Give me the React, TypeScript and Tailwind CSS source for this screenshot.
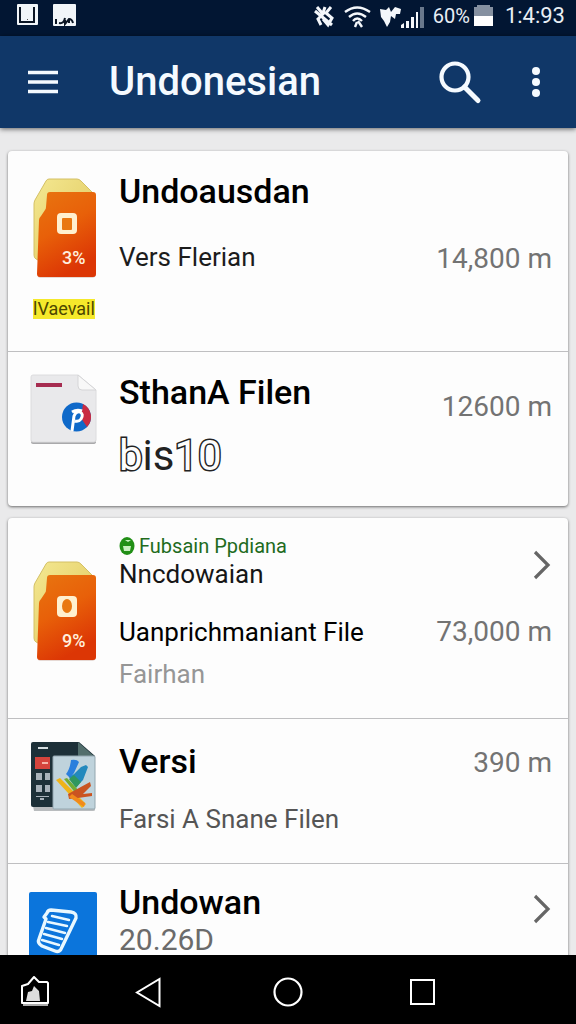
import type { ReactNode } from "react";

function StatusBar() {
  return (
    <div className="flex h-9 shrink-0 items-center bg-[#021633] pr-[11px] pb-1 pl-4 text-[#e8eef5]">
      <svg className="mb-1" width="60" height="24" viewBox="0 0 60 24">
        <rect x="1" y="2" width="21" height="21" rx="1" fill="#f1f5f9" />
        <path d="M4 5v15h14V5" fill="none" stroke="#0b1524" strokeWidth="2" />
        <rect x="11" y="17" width="1" height="1" fill="#555" />
        <rect x="37" y="2" width="23" height="22" rx="1" fill="#f1f5f9" />
        <path
          d="M40 17v5M43 21q5 1 6-5M49 18v4l4-5q3 0 4 4M53 17v4"
          fill="none"
          stroke="#0b1524"
          strokeWidth="2"
        />
      </svg>
      <div className="ml-auto flex items-center gap-1">
        <svg className="mr-1" width="112" height="26" viewBox="0 0 112 26">
          {/* muted */}
          <g fill="none" stroke="#f4f7fb" strokeWidth="3">
            <path d="M4 4l6 7-5 5 3 6M18 4l-5 6 6 5-4 7-5-6M2 8l17 14M12 4l-2 6" />
          </g>
          {/* wifi */}
          <g fill="none" stroke="#f4f7fb" strokeWidth="2.4">
            <path d="M32 9q12-9 25 0M36 14q8-7 17 0M40 18q4-5 9 0M44 19l-2 5M45 18l4 6" />
          </g>
          {/* data */}
          <path
            d="M67 6l6 1 3-3 2 5 4-5 6 2-1 5-4 0-1 5-4-3-1 6-3 5-3-6-3-4z"
            fill="#f4f7fb"
          />
          <g fill="#f4f7fb">
            <path d="M88 25v-3l3-2v5z" />
            <rect x="93" y="18" width="3" height="7" />
            <rect x="98" y="14" width="3" height="11" />
            <rect x="103" y="9" width="2" height="16" />
            <rect x="107" y="4" width="4" height="21" fill="#69788c" />
          </g>
        </svg>
        <span className="text-[20px] leading-6">60%</span>
        <svg width="19" height="24" viewBox="0 0 19 24">
          <path d="M3 1h13v2h3v9H0V3h3z" fill="#8590a0" />
          <rect y="12" width="19" height="10" fill="#fff" />
        </svg>
        <span className="ml-2 text-[22px] leading-6">1:4:93</span>
      </div>
    </div>
  );
}

function AppBar() {
  return (
    <header className="z-10 flex h-[92px] shrink-0 items-center bg-[#103768] pr-6 pl-7 text-[#f5faff] shadow-[0_1px_5px_rgba(0,0,0,0.6)]">
      <button type="button" aria-label="Menu">
        <svg width="30" height="24" viewBox="0 0 30 24">
          <path d="M0 2.5h30M0 12h30M0 21.5h30" stroke="currentColor" strokeWidth="3.4" />
        </svg>
      </button>
      <h1 className="ml-[51px] flex-1 text-[40px] leading-12 font-medium">Undonesian</h1>
      <button type="button" aria-label="Search">
        <svg width="44" height="46" viewBox="0 0 44 46" fill="none" stroke="currentColor">
          <circle cx="17" cy="18" r="13.5" strokeWidth="4.2" />
          <path d="M26.5 28L40 41.5" strokeWidth="5" strokeLinecap="round" />
        </svg>
      </button>
      <button type="button" aria-label="More options" className="ml-[38px]">
        <svg width="32" height="32" viewBox="0 0 32 32" fill="currentColor">
          <circle cx="16" cy="5" r="4" />
          <circle cx="16" cy="16" r="4" />
          <circle cx="16" cy="27" r="4" />
        </svg>
      </button>
    </header>
  );
}

function OrangeFolder({ round }: { round?: boolean }) {
  return (
    <svg width="68" height="102" viewBox="0 0 68 102">
      <defs>
        <linearGradient id="orange" x1="0" y1="0" x2="0.4" y2="1">
          <stop offset="0" stopColor="#e87510" />
          <stop offset="0.5" stopColor="#e86009" />
          <stop offset="1" stopColor="#dc3605" />
        </linearGradient>
        <linearGradient id="cream" x1="0" y1="0" x2="1" y2="1">
          <stop offset="0" stopColor="#f4e891" />
          <stop offset="1" stopColor="#dfc65b" />
        </linearGradient>
      </defs>
      <path d="M9 99q0 1.5 2 1.5h53q2.5 0 2.5-2V92H9z" fill="#8f4a35" opacity="0.4" />
      <path
        d="M20 2h28q2 0 4 2l12 12-40 30-13 38-4-2q-2-1-2-4V27q0-2 1-4L17 4q1-2 3-2z"
        fill="url(#cream)"
        stroke="#d4c065"
      />
      <path
        d="M21 15h43q3 0 3 3v79q0 3-3 3H11q-3 0-3-3L10 43q0-2 2-4l4-6q1-1 1-3l1-12q0-3 3-3z"
        fill="url(#orange)"
      />
      <rect x="28" y="36" width="20" height="21" rx="4" fill="#fff0cf" />
      {round ? (
        <ellipse cx="38" cy="46" rx="5" ry="7" fill="#e97810" />
      ) : (
        <rect x="33" y="41" width="10" height="12" rx="1" fill="#e97810" />
      )}
      <text x="33" y="87" fill="#fff0df" fontSize="18" fontWeight="500">
        {round ? "9%" : "3%"}
      </text>
    </svg>
  );
}

function PaperIcon() {
  return (
    <svg width="68" height="72" viewBox="0 0 68 72">
      <path d="M2 66v2q0 2 2 2h60q3 0 3-2v-4z" fill="#a9a9ab" />
      <path d="M4 1h45l18 15v50q0 2-2 2H4q-2 0-2-2V3q0-2 2-2z" fill="#e9e9eb" stroke="#dcdcde" />
      <path d="M49 1v11q0 4 4 4h14z" fill="#f8f8f8" stroke="#d5d5d7" />
      <rect x="7" y="9" width="26" height="4" fill="#a62c50" />
      <circle cx="47.5" cy="43" r="14.5" fill="#0f69c9" />
      <path d="M54 30a14.5 14.5 0 0 1 4 23l-6-9z" fill="#c92b42" />
      <path
        d="M43 57l2-15q2-5 6-4 4 2 1 7-2 3-6 2M43 38q5-3 10-1"
        fill="none"
        stroke="#fff"
        strokeWidth="3"
      />
    </svg>
  );
}

function CollageIcon() {
  return (
    <svg width="68" height="72" viewBox="0 0 68 72">
      <path d="M4 65h62v4q0 1-2 1H5z" fill="#b9bcbe" />
      <path d="M4 1h46l16 14v51H4q-2 0-2-2V3q0-2 2-2z" fill="#1d3038" />
      <path d="M49 1l17 15H51q-2 0-2-2z" fill="#526e6c" />
      <rect x="9" y="6" width="10" height="2" fill="#d5dde0" />
      <rect x="6" y="16" width="15" height="12" fill="#d5443c" />
      <rect x="13" y="21" width="6" height="2" fill="#f5b5a8" />
      <g fill="#a8b2ba">
        <rect x="7" y="32" width="6" height="7" />
        <rect x="16" y="32" width="5" height="7" />
        <rect x="7" y="44" width="6" height="7" />
        <rect x="16" y="44" width="5" height="7" />
        <rect x="7" y="55" width="13" height="1" />
        <rect x="11" y="57" width="4" height="2" />
      </g>
      <rect x="24" y="15" width="42" height="53" rx="1" fill="#bfd3dc" stroke="#93a6af" />
      <path d="M42 19q6-1 8 2l-5 11-4 5-4-4q4-5 5-14z" fill="#2a7fdd" />
      <path d="M52 26l5-2 2 2-5 13-6 6-8-9 5-3z" fill="#2389bd" />
      <path d="M45 34l7 7-5 6-7-9z" fill="#30975f" />
      <path d="M27 39l4-2 26 26-4 4z" fill="#efb318" />
      <path d="M35 38l3-1 13 14-3 3z" fill="#72ac32" />
      <path d="M39 53l22-12 1 4-8 8 9-1v3l-14 2-9 1z" fill="#ca5421" />
      <path d="M43 53l13 9-1 4-15-10z" fill="#f18a1c" />
    </svg>
  );
}

function DocumentIcon() {
  return (
    <svg width="68" height="72" viewBox="0 0 68 72">
      <rect width="68" height="72" rx="2" fill="#0b75dc" />
      <g fill="none" stroke="#e9f8ff" strokeLinejoin="round" strokeLinecap="round">
        <path
          d="M22 18l20 2q6 1 5 6L33 55q-2 6-7 4l-13-5q-5-3-3-7l7-20-2-2 3-4q1-3 4-3z"
          strokeWidth="3.4"
        />
        <path
          d="M23 24l17 4M19 30l19 4M17 36l19 5M15 42l18 5M13 48l17 5"
          strokeWidth="2.5"
        />
      </g>
    </svg>
  );
}

function Chevron() {
  return (
    <svg className="mr-px" width="18" height="30" viewBox="0 0 18 30">
      <path d="M2 2l13 13L2 28" fill="none" stroke="#666" strokeWidth="3.2" />
    </svg>
  );
}

interface RowProps {
  icon: ReactNode;
  side: ReactNode;
  children: ReactNode;
  className: string;
}

function Row({ icon, side, children, className }: RowProps) {
  return (
    <li className={`flex border-b border-[#bfbfc1] pr-4 last:border-b-0 ${className}`}>
      <div className="flex w-[111px] shrink-0 flex-col items-start pt-[22px] pl-[21px]">{icon}</div>
      <div className="min-w-0 flex-1 whitespace-nowrap">{children}</div>
      <div className="flex flex-col items-end whitespace-nowrap text-[28px] leading-8 text-[#737373]">
        {side}
      </div>
    </li>
  );
}

function Card({ children }: { children: ReactNode }) {
  return (
    <ul className="shrink-0 rounded-sm bg-[#fdfdfd] shadow-[0_1px_3px_rgba(0,0,0,0.55)]">
      {children}
    </ul>
  );
}

function NavBar() {
  return (
    <nav className="flex h-[69px] shrink-0 items-center bg-black pt-1 pl-5 text-white">
      <button type="button" aria-label="Gallery">
        <svg width="30" height="32" viewBox="0 0 30 32">
          <path
            d="M2 10l6-2 6-7 5 5 8 0 1 1v20H2z"
            fill="none"
            stroke="currentColor"
            strokeWidth="2"
            strokeLinejoin="round"
          />
          <path d="M6 25l2-9 4-1 2-5 5 5 1 10z" fill="#ddd" />
          <path d="M3 29h25" stroke="#aaa" strokeWidth="2" />
        </svg>
      </button>
      <button type="button" aria-label="Back" className="ml-[85px]">
        <svg width="28" height="32" viewBox="0 0 28 32">
          <path d="M24.5 3v27L2 16.500z" fill="none" stroke="currentColor" strokeWidth="2" />
        </svg>
      </button>
      <button type="button" aria-label="Home" className="ml-[109px]">
        <svg width="32" height="32" viewBox="0 0 32 32">
          <circle cx="16" cy="16" r="13.5" fill="none" stroke="currentColor" strokeWidth="2.2" />
        </svg>
      </button>
      <button type="button" aria-label="Recent apps" className="ml-[105px]">
        <svg width="28" height="28" viewBox="0 0 28 28">
          <rect x="2" y="2" width="23" height="24" fill="none" stroke="currentColor" strokeWidth="2" />
        </svg>
      </button>
    </nav>
  );
}

export default function App() {
  return (
    <div className="flex h-screen flex-col overflow-hidden bg-[#eaeaeb] font-[Roboto,sans-serif]">
      <StatusBar />
      <AppBar />
      <main className="flex min-h-0 flex-1 flex-col gap-3 overflow-hidden px-2 pt-[23px]">
        <Card>
          <Row
            className="h-[201px] pt-1"
            icon={
              <>
                <OrangeFolder />
                <span className="mt-5 ml-1 bg-[#f5e92b] text-[18px] leading-5 text-[#4c4600]">
                  lVaevail
                </span>
              </>
            }
            side={<span className="pt-[88px]">14,800 m</span>}
          >
            <h2 className="pt-4 text-[34px] leading-10 font-medium">Undoausdan</h2>
            <p className="pt-7 text-[26px] leading-9 text-[#1c1c1c]">Vers Flerian</p>
          </Row>
          <Row
            className="h-[154px]"
            icon={<PaperIcon />}
            side={<span className="pt-[39px]">12600 m</span>}
          >
            <h2 className="pt-5 text-[34px] leading-10 font-medium">SthanA Filen</h2>
            <p className="pt-5 text-[42px] leading-12 text-[#222]">
              <span className="text-[#fdfdfd] [-webkit-text-stroke:3px_#222] [paint-order:stroke_fill]">b</span>
              is
              <span className="text-[#fdfdfd] [-webkit-text-stroke:3px_#222] [paint-order:stroke_fill]">10</span>
            </p>
          </Row>
        </Card>
        <Card>
          <Row
            className="h-[201px] pt-5"
            icon={<OrangeFolder round />}
            side={
              <>
                <span className="pt-3">
                  <Chevron />
                </span>
                <span className="pt-9">73,000 m</span>
              </>
            }
          >
            <div className="-mt-1">
              <p className="flex items-center gap-1 text-[20px] leading-6 text-[#226b1d]">
                <svg width="16" height="20" viewBox="0 0 16 20">
                  <ellipse cx="8" cy="10" rx="7.5" ry="9" fill="#218f16" />
                  <path d="M4 10h8l-1 5H5zM6 4l3 2 3-2" fill="#c8efc0" />
                </svg>
                Fubsain Ppdiana
              </p>
              <p className="text-[26px] leading-8 text-[#161616]">Nncdowaian</p>
              <p className="pt-6 text-[26px] leading-9">Uanprichmaniant File</p>
              <p className="pt-2 text-[26px] leading-8 text-[#969696]">Fairhan</p>
            </div>
          </Row>
          <Row
            className="h-[145px]"
            icon={<CollageIcon />}
            side={<span className="pt-7">390 m</span>}
          >
            <h2 className="pt-[22px] text-[34px] leading-10 font-medium">Versi</h2>
            <p className="pt-5 text-[26px] leading-9 text-[#555]">Farsi A Snane Filen</p>
          </Row>
          <Row
            className="h-[145px] pt-[6px]"
            icon={<DocumentIcon />}
            side={
              <span className="pt-6">
                <Chevron />
              </span>
            }
          >
            <h2 className="pt-3 text-[34px] leading-10 font-medium">Undowan</h2>
            <p className="text-[30px] leading-9 text-[#6b6b6b]">20.26D</p>
          </Row>
        </Card>
      </main>
      <NavBar />
    </div>
  );
}
